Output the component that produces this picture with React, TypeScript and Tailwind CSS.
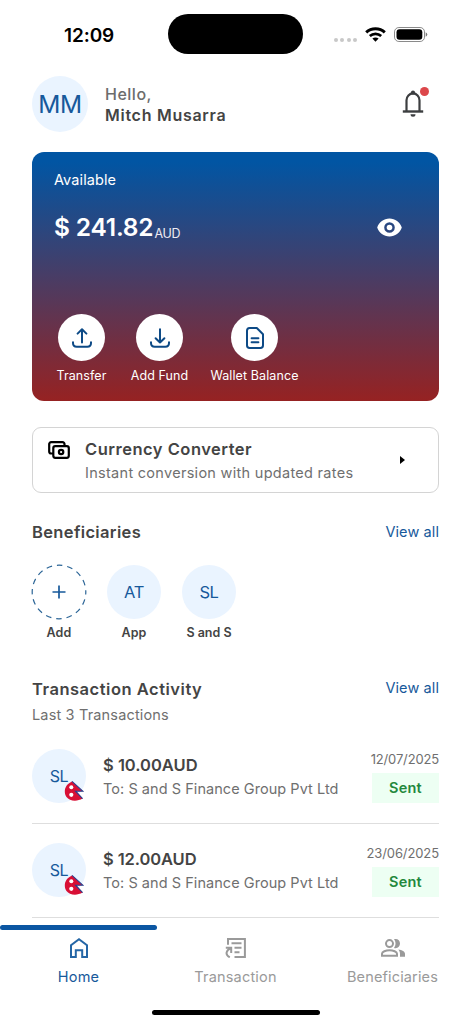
import React from "react";

type IconProps = { className?: string };

function WifiIcon() {
  return (
    <svg viewBox="0 0 21 15" className="h-[15px] w-[21px]" fill="none" stroke="#000" strokeWidth="3">
      <path d="M1.200 5.400C6.300.6 14.700.6 19.800 5.400" />
      <path d="M4.800 9C8.100 6.100 12.900 6.100 16.200 9" strokeWidth="2.700" />
      <path d="M10.500 14.700 7.400 11.600C9.200 10.100 11.800 10.100 13.600 11.600Z" fill="#000" stroke="none" />
    </svg>
  );
}

function BatteryIcon() {
  return (
    <svg viewBox="0 0 34 15" className="h-[15px] w-[34px]">
      <rect x=".5" y=".5" width="30" height="14" rx="4.400" fill="none" stroke="#8a8a8a" />
      <rect x="2.500" y="2.200" width="25.800" height="10.600" rx="3" fill="#000" />
      <path d="M31.700 5.300Q33.300 6 33.300 7.500T31.700 9.700Z" fill="#777" />
    </svg>
  );
}

function BellIcon() {
  return (
    <svg viewBox="0 0 22 28" className="h-7 w-[22px]" fill="none" stroke="#3c3e40" strokeWidth="2.200">
      <path d="M.8 22.500H21.200" strokeWidth="2.400" />
      <path d="M4.500 22V11.200a6.500 6.800 0 0 1 13 0V22" />
      <circle cx="11" cy="3.700" r="2.100" fill="#3c3e40" stroke="none" />
      <path d="M8.500 25.200h5a2.500 2.500 0 0 1-5 0Z" fill="#3c3e40" stroke="none" />
    </svg>
  );
}

function EyeIcon() {
  return (
    <svg viewBox="0 0 25 19" className="h-[19px] w-[25px]">
      <path
        fillRule="evenodd"
        fill="#fff"
        d="M12.500.5C6.800.5 2.100 4.200.2 9.500 2.100 14.800 6.800 18.500 12.500 18.500S22.900 14.800 24.800 9.500C22.900 4.200 18.200.5 12.500.5ZM12.500 14.800a5.300 5.300 0 1 1 0-10.600 5.300 5.300 0 0 1 0 10.600Z"
      />
      <circle cx="12.500" cy="9.500" r="2.800" fill="#fff" />
    </svg>
  );
}

function UploadIcon() {
  return (
    <svg viewBox="0 0 20 20" className="size-5" fill="none" stroke="#0d4a86" strokeWidth="2" strokeLinecap="round" strokeLinejoin="round">
      <path d="M10 14.500V1.500M5.600 5.600 10 1.300l4.400 4.300" />
      <path d="M1 14.300v.8c0 2.600 1.200 3.700 3.700 3.700h10.600c2.500 0 3.700-1.100 3.700-3.700v-.8" />
    </svg>
  );
}

function DownloadIcon() {
  return (
    <svg viewBox="0 0 20 20" className="size-5" fill="none" stroke="#0d4a86" strokeWidth="2" strokeLinecap="round" strokeLinejoin="round">
      <path d="M10 1.200v13.200M5.600 10.200l4.400 4.300 4.400-4.300" />
      <path d="M1 14.300v.8c0 2.600 1.200 3.700 3.700 3.700h10.600c2.500 0 3.700-1.100 3.700-3.700v-.8" />
    </svg>
  );
}

function DocumentIcon() {
  return (
    <svg viewBox="0 0 18 22" className="h-[22px] w-[18px]" fill="none" stroke="#0d4a86" strokeWidth="2" strokeLinecap="round" strokeLinejoin="round">
      <path d="M3.600 1h7.200L17 7.300v10.900c0 1.900-.9 2.800-2.600 2.800H3.600C1.900 21 1 20.100 1 18.200V3.800C1 1.900 1.900 1 3.600 1Z" />
      <path d="M5.600 11.200h6.800M5.600 15.200h6.800" />
    </svg>
  );
}

function MoneyIcon() {
  return (
    <svg viewBox="0 0 22 18" className="h-[18px] w-[22px]" fill="none" stroke="#000" strokeWidth="2.200">
      <path d="M5 12.500H3.200A2 2 0 0 1 1.200 10.500V3.100A2 2 0 0 1 3.200 1.100h11.300a2 2 0 0 1 2 2V5" />
      <rect x="5.300" y="5.100" width="15.500" height="11.700" rx="2" />
      <circle cx="13.100" cy="11" r="2.200" />
    </svg>
  );
}

function HomeIcon() {
  return (
    <svg viewBox="0 0 18 20" className="h-5 w-[18px]" fill="none" stroke="#2566a6" strokeWidth="2">
      <path d="M1 19V7.300L9 1.300l8 6V19h-4.800v-6.700H5.800V19Z" />
    </svg>
  );
}

function TransactionIcon() {
  return (
    <svg viewBox="0 0 21 20" className="h-5 w-[21px]" fill="none" stroke="#9a9a9a" strokeWidth="2">
      <path d="M3 6.800V1h16.900v18H9.500" />
      <path d="M6.500 5.300H16.500M9.500 9.800H16.500M9.500 14.300H14.500" />
      <path d="M.8 9.800h5.400v5.200M5.800 10.200C.9 12.600-.2 16.500 4.800 19.300" />
    </svg>
  );
}

function PeopleIcon() {
  return (
    <svg viewBox="0 0 24 18" className="h-[18px] w-6" fill="#9a9a9a">
      <circle cx="8.500" cy="4.600" r="3.500" fill="none" stroke="#9a9a9a" strokeWidth="2" />
      <path d="M1 16.800v-2c0-2 3.800-3.600 7.500-3.600S16 12.800 16 14.800v2Z" fill="none" stroke="#9a9a9a" strokeWidth="2" />
      <path d="M13 .3c3.500-1 6 1.300 6 4.300s-2.500 5.300-6 4.300c2-2.600 2-6 0-8.600ZM17.300 10.500c3.800.5 6.700 2 6.700 4.300v3h-5v-3c0-1.800-.6-3.100-1.700-4.300Z" />
    </svg>
  );
}

function NepalFlag({ className }: IconProps) {
  return (
    <svg viewBox="0 0 20 20" className={className}>
      <path d="M8 .4 18.800 10.200H12.400L18.600 17.600C13 20.800 5.500 20.200 2.500 16-.8 11 .6 3.600 8 .4Z" fill="#d80f35" />
      <path d="M8 .4 18.800 10.200H11.500L18.600 17.600" fill="none" stroke="#27408f" strokeWidth="1.100" />
      <circle cx="7.300" cy="6.200" r="2" fill="#fff" />
      <circle cx="7.300" cy="13.800" r="2.100" fill="#fff" />
    </svg>
  );
}

function StatusBar() {
  return (
    <div className="flex h-[70px] items-start pt-[14px]">
      <div className="w-[168px] pl-16 text-[19px] leading-[43px] font-semibold tracking-[-0.1px] text-black">12:09</div>
      <div className="h-10 w-[135px] rounded-full bg-black" />
      <div className="ml-[31px] flex h-10 items-center">
        <div className="mt-[12px] flex gap-[2.400px]">
          <i className="size-1 rounded-full bg-[#c8c8c8]" />
          <i className="size-1 rounded-full bg-[#c8c8c8]" />
          <i className="size-1 rounded-full bg-[#c8c8c8]" />
          <i className="size-1 rounded-full bg-[#c8c8c8]" />
        </div>
        <div className="ml-2"><WifiIcon /></div>
        <div className="ml-[8px]"><BatteryIcon /></div>
      </div>
    </div>
  );
}

function Header() {
  return (
    <header className="flex h-[82px] items-start pt-[6px] pr-[10px] pl-8">
      <div className="flex size-[56px] items-center justify-center rounded-full bg-[#eaf4ff] text-[24.500px] tracking-[-0.5px] text-[#17599b]">MM</div>
      <div className="mt-[8px] ml-[17px] leading-[21px]">
        <div className="text-[16px] font-medium tracking-[0.5px] text-[#6c6c6c]">Hello,</div>
        <div className="text-[16px] font-semibold tracking-[0.720px] text-[#444]">Mitch Musarra</div>
      </div>
      <div className="relative mt-[13px] mr-[37px] ml-auto">
        <BellIcon />
        <span className="absolute top-[-2px] left-[18px] size-[9px] rounded-full bg-[#dc474b]" />
      </div>
    </header>
  );
}

const actions = [
  { label: "Transfer", icon: <UploadIcon />, box: "w-[56px]" },
  { label: "Add Fund", icon: <DownloadIcon />, box: "ml-[18px] w-[64px]" },
  { label: "Wallet Balance", icon: <DocumentIcon />, box: "ml-[15px] w-[96px]" },
];

function BalanceCard() {
  return (
    <section className="mx-8 flex h-[249px] flex-col rounded-[12px] bg-linear-to-b/srgb from-[#0155a3] from-4% to-[#962222] text-white">
      <div className="mt-[17px] pl-[22px] text-[14.500px] leading-[21px] tracking-[0.1px]">Available</div>
      <div className="mt-[21px] flex h-[32px] items-center pr-[37px] pl-[22px]">
        <span className="text-[24.500px] leading-8 font-semibold tracking-[-0.2px]">$ 241.82</span>
        <span className="mt-[14px] ml-[1px] text-[12.500px] leading-4 tracking-[-0.3px] text-[#eeeaf2]">AUD</span>
        <span className="ml-auto"><EyeIcon /></span>
      </div>
      <div className="mt-[71px] flex pl-[21.500px]">
        {actions.map((a) => (
          <div key={a.label} className={"flex flex-col items-center " + a.box}>
            <div className="flex size-[47px] items-center justify-center rounded-full bg-white">{a.icon}</div>
            <div className="mt-[6px] text-[12.500px] leading-[18px] tracking-[0.1px] whitespace-nowrap">{a.label}</div>
          </div>
        ))}
      </div>
    </section>
  );
}

function Converter() {
  return (
    <section className="mx-8 mt-[26px] flex h-[66px] items-start rounded-[9px] border border-[#d4d4d4] pr-[33.500px] pl-[15px]">
      <div className="mt-[13px]"><MoneyIcon /></div>
      <div className="mt-[10px] ml-[15px]">
        <div className="text-[16.500px] leading-[23px] font-semibold tracking-[0.5px] text-[#444]">Currency Converter</div>
        <div className="text-[14.500px] leading-[23px] tracking-[0.290px] text-[#6f6f6f]">Instant conversion with updated rates</div>
      </div>
      <svg viewBox="0 0 5 8" className="mt-[28px] ml-auto h-2 w-[5px]"><path d="M0 0 5 4 0 8Z" /></svg>
    </section>
  );
}

function Beneficiaries() {
  return (
    <section className="px-8 pt-[28px]">
      <div className="flex h-[22px] items-center justify-between">
        <h2 className="text-[16.500px] font-semibold tracking-[0.350px] text-[#444]">Beneficiaries</h2>
        <a className="text-[14.500px] tracking-[0.1px] text-[#17599b]">View all</a>
      </div>
      <div className="mt-[22px] flex gap-[21px] text-[12.500px] leading-[18px] font-semibold text-[#444]">
        <div className="flex w-[54px] flex-col items-center">
          <svg viewBox="0 0 56 56" className="-m-px size-14" fill="none" stroke="#2a6496">
            <circle cx="28" cy="28" r="26.800" strokeWidth="1.200" strokeDasharray="5.600 4.925" strokeDashoffset="3" />
            <path d="M21.500 28h13M28 21.500v13" strokeWidth="1.700" stroke="#17599b" />
          </svg>
          <div className="mt-[5px] tracking-[0.2px]">Add</div>
        </div>
        <div className="flex w-[54px] flex-col items-center">
          <div className="flex size-[54px] items-center justify-center rounded-full bg-[#eaf4ff] text-[16.500px] font-normal tracking-[-0.3px] text-[#17599b]">AT</div>
          <div className="mt-[5px] tracking-[0.1px]">App</div>
        </div>
        <div className="flex w-[54px] flex-col items-center">
          <div className="flex size-[54px] items-center justify-center rounded-full bg-[#eaf4ff] text-[16.500px] font-normal tracking-[-0.5px] text-[#17599b]">SL</div>
          <div className="mt-[5px] whitespace-nowrap">S and S</div>
        </div>
      </div>
    </section>
  );
}

const transactions = [
  { amount: "$ 10.00AUD", date: "12/07/2025", dateClass: "tracking-[-0.150px]", amountClass: "tracking-[0px]" },
  { amount: "$ 12.00AUD", date: "23/06/2025", dateClass: "tracking-[-0.1px]", amountClass: "tracking-[-0.1px]" },
];

function Transactions() {
  return (
    <section className="px-8 pt-[36px]">
      <div className="flex h-[22px] items-start justify-between leading-[22px]">
        <h2 className="text-[16.500px] font-semibold tracking-[0.520px] text-[#444]">Transaction Activity</h2>
        <a className="-mt-px text-[14.500px] tracking-[0.1px] text-[#17599b]">View all</a>
      </div>
      <div className="mt-[3.500px] text-[14.500px] leading-[21px] tracking-[0.160px] text-[#6f6f6f]">Last 3 Transactions</div>
      <div className="mt-[5px]">
        {transactions.map((t) => (
          <div key={t.date} className="flex h-[94.200px] items-start border-b border-[#dedede] pt-[19.800px]">
            <div className="relative flex size-[54px] shrink-0 items-center justify-center rounded-full bg-[#eaf4ff] text-[16px] tracking-[-0.4px] text-[#17599b]">
              SL
              <NepalFlag className="absolute top-[32px] left-[32px] size-5" />
            </div>
            <div className="mt-[3.800px] ml-[17px] leading-6 whitespace-nowrap">
              <div className={"text-[16.500px] font-semibold text-[#444] " + t.amountClass}>{t.amount}</div>
              <div className="text-[14.500px] tracking-[0.050px] text-[#6f6f6f]">To: S and S Finance Group Pvt Ltd</div>
            </div>
            <div className="mt-[1px] ml-auto flex flex-col items-end">
              <div className={"text-[13px] leading-[18px] text-[#6f6f6f] " + t.dateClass}>{t.date}</div>
              <div className="mt-[4.500px] flex h-[30px] w-[67px] items-center justify-center bg-[#edfff3] text-[14.500px] font-semibold tracking-[0.2px] text-[#23883c]">Sent</div>
            </div>
          </div>
        ))}
      </div>
    </section>
  );
}

function BottomNav() {
  return (
    <nav className="mt-[7px] flex flex-col">
      <div className="h-[5px] w-[157px] rounded-full bg-[#0b56a2]" />
      <div className="grid grid-cols-3 text-[14.500px] leading-[22px] text-[#9a9a9a]">
        <div className="flex flex-col items-center text-[#17599b]">
          <div className="flex h-[36px] items-center"><HomeIcon /></div>
          <div className="tracking-[0.2px]">Home</div>
        </div>
        <div className="flex flex-col items-center">
          <div className="flex h-[36px] items-center"><TransactionIcon /></div>
          <div className="tracking-[0.180px]">Transaction</div>
        </div>
        <div className="flex flex-col items-center">
          <div className="flex h-[36px] items-center"><PeopleIcon /></div>
          <div className="tracking-[0.150px]">Beneficiaries</div>
        </div>
      </div>
      <div className="mt-[22px] h-[5px] w-[168px] self-center rounded-full bg-black" />
    </nav>
  );
}

export default function App() {
  return (
    <main className="h-[1024px] w-[471px] overflow-hidden bg-white font-['Inter',sans-serif]">
      <StatusBar />
      <Header />
      <BalanceCard />
      <Converter />
      <Beneficiaries />
      <Transactions />
      <BottomNav />
    </main>
  );
}
